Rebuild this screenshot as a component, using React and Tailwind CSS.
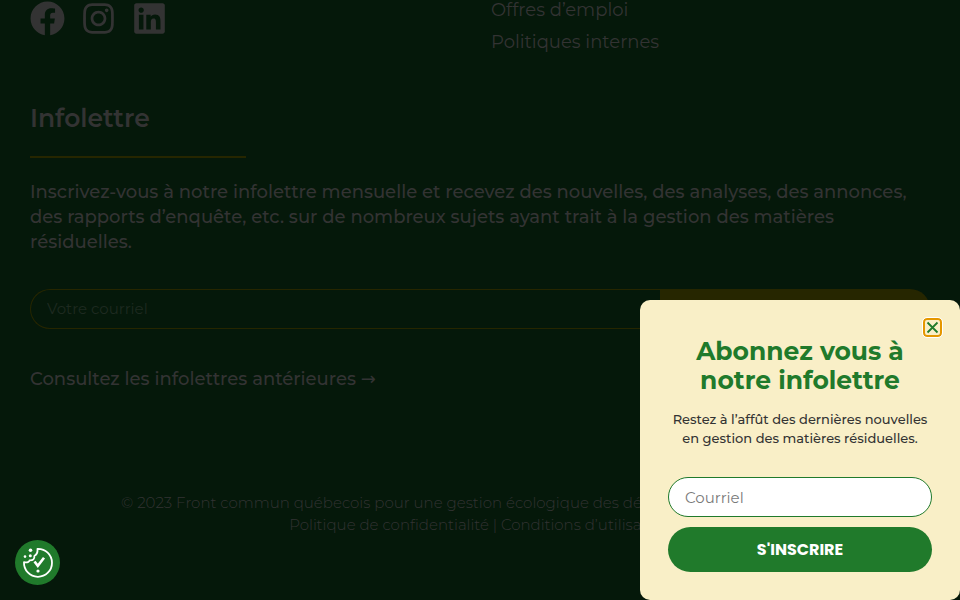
import React from "react";
import { FaFacebook, FaInstagram, FaLinkedin } from "react-icons/fa";

const socials = [
    { name: "Facebook", Icon: FaFacebook },
    { name: "Instagram", Icon: FaInstagram },
    { name: "LinkedIn", Icon: FaLinkedin },
];

function Footer() {
    return (
        <footer className="px-[30px] text-[#333333]">
            {/* Social + links */}
            <div className="grid grid-cols-2 gap-[22px]">
                <div className="flex gap-4 pt-px">
                    {socials.map(({ name, Icon }) => (
                        <a key={name} href="#" aria-label={name} className="h-[35px]">
                            <Icon className="size-[35px]" />
                        </a>
                    ))}
                </div>
                <ul className="flex flex-col gap-3 text-lg leading-5">
                    <li><a href="#">Offres d’emploi</a></li>
                    <li><a href="#">Politiques internes</a></li>
                </ul>
            </div>

            {/* Newsletter */}
            <section className="mt-[50px]">
                <h2 className="text-[25px] leading-8 font-semibold">Infolettre</h2>
                <hr className="mt-[22px] w-[216px] border-t-2 border-[#262600]" />
                <p className="mt-[22px] text-lg leading-[25px] font-medium">
                    Inscrivez-vous à notre infolettre mensuelle et recevez des nouvelles, des analyses, des annonces, des rapports d’enquête, etc. sur de nombreux sujets ayant trait à la gestion des matières résiduelles.
                </p>
                <form className="mt-[34px] flex h-10" onSubmit={(e) => e.preventDefault()}>
                    <input
                        type="email"
                        aria-label="Votre courriel"
                        placeholder="Votre courriel"
                        className="w-[70%] rounded-l-full border border-r-0 border-[#262600] bg-transparent px-4 text-[15px] placeholder:text-[#1e2a20]"
                    />
                    <button type="submit" className="w-[30%] rounded-r-full bg-[#262600] pt-px font-['Poppins','Montserrat',sans-serif] text-base font-bold">
                        S'INSCRIRE
                    </button>
                </form>
                <p className="mt-[37px] text-lg leading-[25px] font-medium">
                    <a href="#">Consultez les infolettres antérieures <span className="font-['DejaVu_Sans',sans-serif] font-normal">→</span></a>
                </p>
            </section>

            {/* Copyright */}
            <div className="mt-[100px] pb-16 text-center text-[15px] leading-[22px] font-light">
                <p>© 2023 Front commun québecois pour une gestion écologique des déchets | Tous droits réservés</p>
                <p><a href="#">Politique de confidentialité</a> | <a href="#">Conditions d’utilisation</a></p>
            </div>
        </footer>
    );
}

function CookieButton() {
    return (
        <button type="button" aria-label="Cookies" className="fixed bottom-[15px] left-[15px] size-[45px] rounded-full bg-[#207a2b] text-white">
            <svg viewBox="0 0 45 45" className="size-full" fill="none" stroke="currentColor">
                <path d="M22.5 8.8A14 14 0 1 1 9 22.2c3.400.8 5.200-.4 5.500-1.800 3.500.2 5.300-1.500 4.800-4.400 2.600-1.300 3.500-3.500 3.200-7.200Z" strokeWidth="1.800" strokeLinejoin="round" />
                <path d="M19.500 21.500l3.300 4.300 6.200-8" strokeWidth="2.600" />
                <g fill="currentColor" stroke="none">
                    <circle cx="15.500" cy="10.200" r="1.800" />
                    <circle cx="10" cy="16.600" r="1.300" />
                    <circle cx="15.300" cy="15.800" r="1.500" />
                    <circle cx="23" cy="31" r="1.600" />
                </g>
            </svg>
        </button>
    );
}

function Popup() {
    return (
        <div role="dialog" aria-labelledby="popup-title" className="fixed right-0 bottom-0 w-[320px] rounded-[10px] bg-[#f9efc7] px-7 pt-[37px] pb-7 text-center">
            <button type="button" aria-label="Fermer" className="absolute top-[18px] right-[18px] size-[19px] rounded-[4px] border-2 border-[#e59700] text-[#207a2b] outline outline-white">
                <svg viewBox="0 0 15 15" className="size-full" stroke="currentColor" strokeWidth="1.800">
                    <path d="M2.500 2.500l10 10M12.500 2.500l-10 10" />
                </svg>
            </button>
            <h2 id="popup-title" className="text-[25px] leading-[29px] font-bold text-[#207a2b]">
                Abonnez vous à<br />notre infolettre
            </h2>
            <p className="mt-[15px] text-[13px] leading-[19px] font-medium text-[#333333]">
                Restez à l’affût des dernières nouvelles en gestion des matières résiduelles.
            </p>
            <form className="mt-[29px] flex flex-col gap-[10px]" onSubmit={(e) => e.preventDefault()}>
                <input
                    type="email"
                    aria-label="Courriel"
                    placeholder="Courriel"
                    className="h-10 w-full rounded-full border border-[#207a2b] bg-white px-4 text-[15px] placeholder:text-[#7a7a7a]"
                />
                <button type="submit" className="h-[45px] rounded-full bg-[#207a2b] pt-px font-['Poppins','Montserrat',sans-serif] text-base font-bold text-white">
                    S'INSCRIRE
                </button>
            </form>
        </div>
    );
}

function App() {
    return (
        <div className="min-h-screen overflow-hidden bg-[#05180a] font-['Montserrat','Inter',sans-serif]">
            <Footer />
            <CookieButton />
            <Popup />
        </div>
    );
}

export default App;
